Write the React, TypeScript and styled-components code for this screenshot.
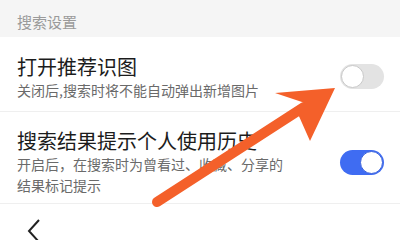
import React from "react";
import styled, { createGlobalStyle } from "styled-components";

const GlobalStyle = createGlobalStyle`
  html, body {
    margin: 0;
    padding: 0;
    background: #fff;
    font-family: "Noto Sans CJK SC", "Noto Sans", sans-serif;
  }
  * { box-sizing: border-box; }
`;

const Page = styled.div`
  position: relative;
  width: 400px;
  height: 240px;
  overflow: hidden;
  background: #fff;
`;

const SectionHeader = styled.div`
  height: 37px;
  background: #f5f5f5;
  color: #9a9a9a;
  font-size: 15px;
  line-height: 37px;
  padding-left: 17px;
  padding-top: 3px;
`;

const Row = styled.div<{ $pt: number; $pb: number }>`
  display: flex;
  align-items: center;
  justify-content: space-between;
  padding: ${(p) => p.$pt}px 17px ${(p) => p.$pb}px 17px;
  border-bottom: 1px solid #efefef;
`;

const TextBlock = styled.div`
  display: flex;
  flex-direction: column;
`;

const Title = styled.div`
  font-size: 20px;
  line-height: 26px;
  color: #1c1c1c;
`;

const Sub = styled.div`
  font-size: 14px;
  line-height: 21px;
  color: #6a6a6a;
`;

const Toggle = styled.div<{ $on: boolean; $shift: number }>`
  position: relative;
  flex: none;
  width: 44px;
  height: 25px;
  border-radius: 13px;
  margin-right: -1px;
  margin-top: ${(p) => p.$shift}px;
  background: ${(p) => (p.$on ? "#3f6cf2" : "#e3e3e3")};
`;

const Knob = styled.div<{ $on: boolean }>`
  position: absolute;
  top: 1px;
  left: ${(p) => (p.$on ? "20px" : "1px")};
  width: 23px;
  height: 23px;
  border-radius: 50%;
  background: #fff;
  border: 1px solid ${(p) => (p.$on ? "#3a62dc" : "#c8c8c8")};
`;

const BottomBar = styled.div`
  padding: 14px 0 0 26px;
`;

const Overlay = styled.svg`
  position: absolute;
  left: 0;
  top: 0;
  pointer-events: none;
`;

export default function App() {
  return (
    <Page>
      <GlobalStyle />
      <SectionHeader>搜索设置</SectionHeader>
      <Row $pt={17} $pb={10}>
        <TextBlock>
          <Title>打开推荐识图</Title>
          <Sub>关闭后,搜索时将不能自动弹出新增图片</Sub>
        </TextBlock>
        <Toggle $on={false} $shift={-3}>
          <Knob $on={false} />
        </Toggle>
      </Row>
      <Row $pt={16} $pb={7}>
        <TextBlock>
          <Title>搜索结果提示个人使用历史</Title>
          <Sub>开启后，在搜索时为曾看过、收藏、分享的</Sub>
          <Sub>结果标记提示</Sub>
        </TextBlock>
        <Toggle $on={true} $shift={0}>
          <Knob $on={true} />
        </Toggle>
      </Row>
      <BottomBar>
        <svg width="16" height="26" viewBox="0 0 16 26">
          <polyline points="13,2 3,13 13,24" fill="none" stroke="#222" strokeWidth="2" />
        </svg>
      </BottomBar>
      <Overlay width="400" height="240" viewBox="0 0 400 240">
        <line x1="157" y1="202" x2="304" y2="107" stroke="#f4602a" strokeWidth="10" strokeLinecap="round" />
        <polygon points="335,88 275,93 305,103 298,114 310,141" fill="#f4602a" />
      </Overlay>
    </Page>
  );
}
